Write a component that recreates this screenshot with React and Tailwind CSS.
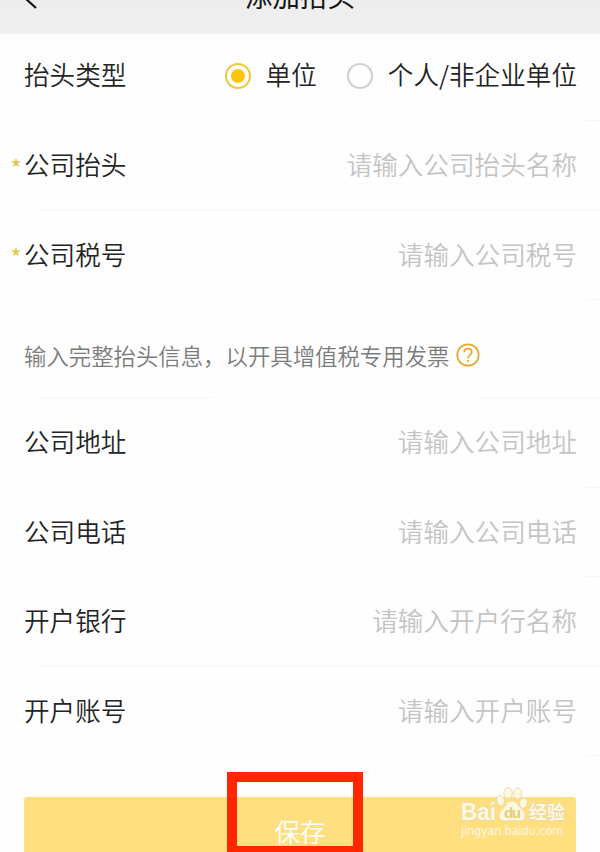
import React, { useState } from 'react';

const companyFields = [
  { label: '公司抬头', placeholder: '请输入公司抬头名称', required: true, height: 'h-[90px]', line: true },
  { label: '公司税号', placeholder: '请输入公司税号', required: true, height: 'h-[89px]' },
];

const bankFields = [
  { label: '公司地址', placeholder: '请输入公司地址', height: 'h-[90px]' },
  { label: '公司电话', placeholder: '请输入公司电话', height: 'h-[89px]' },
  { label: '开户银行', placeholder: '请输入开户行名称', height: 'h-[90px]', line: true },
  { label: '开户账号', placeholder: '请输入开户账号', height: 'h-[89px]' },
];

const Radio = ({ label, checked, onSelect }) => (
  <button onClick={onSelect} className="flex items-center">
    <span
      className={`flex size-[26px] items-center justify-center rounded-full border-2 ${
        checked ? 'border-[#edc63c]' : 'border-[#cfcfcf]'
      }`}
    >
      {checked && <span className="size-[14px] rounded-full bg-[#fcc50c]" />}
    </span>
    <span className="ml-[15px] pb-[4px]">{label}</span>
  </button>
);

const Field = ({ label, placeholder, required, height, line }) => (
  <div className={`flex shrink-0 flex-col ${height}`}>
    <label className="flex flex-1 items-center pb-[3px] pr-[23px]">
      <span className="w-[24px] pl-[11px] pt-[5px] text-[21px] font-medium text-[#e3c63c]">{required && '*'}</span>
      <span>{label}</span>
      <input
        className="ml-auto w-[260px] text-right outline-none placeholder:text-[#c4c4c4]"
        placeholder={placeholder}
      />
    </label>
    <div className={`ml-auto h-px bg-[#f5f5f5] ${line ? 'w-[564px]' : 'w-[13px]'}`} />
  </div>
);

const Watermark = () => (
  <div className="absolute left-[437px] top-[-10px] w-[108px] font-normal text-[#fff8e2]">
    <svg width="108" height="36" viewBox="0 0 108 36" fill="#fff8e2" stroke="#ead8a4" strokeWidth="0.8">
      <ellipse cx="39.500" cy="13.500" rx="3.800" ry="5.200" transform="rotate(-10 39.5 13.5)" />
      <ellipse cx="47" cy="6" rx="4.200" ry="5.500" />
      <ellipse cx="56.500" cy="6.500" rx="4.200" ry="5.500" transform="rotate(8 56.5 6.5)" />
      <ellipse cx="62.500" cy="16" rx="3.800" ry="5.200" transform="rotate(14 62.5 16)" />
      <path d="M51 14c-5 0-6 5-9.500 8-5 4-5 12 2 12 3 0 4.500-.7 7-.7s4 .7 8 .7c7 0 7-8 2-12-3.500-3-4.500-8-9.500-8z" />
      <g style={{ paintOrder: 'stroke' }} strokeWidth="1.4" fontWeight="bold">
        <text x="0" y="33" fontFamily="Liberation Sans" fontSize="24" textLength="35" lengthAdjust="spacingAndGlyphs">Bai</text>
        <text x="68" y="32" fontFamily="Noto Sans CJK SC" fontSize="18" textLength="36">经验</text>
      </g>
      <text x="43" y="31" fontFamily="Liberation Sans" fontWeight="bold" fontSize="15" fill="#e8ca7a" stroke="none" textLength="17">du</text>
    </svg>
    <div className="mt-px font-['DejaVu_Sans'] text-[11.5px] leading-[15px] tracking-[-0.25px]">jingyan.baidu.com</div>
  </div>
);

const App = () => {
  const [type, setType] = useState('company');

  return (
    <div className="relative flex h-[852px] w-[600px] flex-col overflow-hidden bg-[#fefefe] font-['Noto_Sans_CJK_SC',sans-serif] text-[25.6px] leading-[36px] font-[350] text-[#242424]">
      <header className="flex h-[34px] shrink-0 items-start justify-between bg-linear-to-b from-[#ededed] to-[#f0f0f0] text-[#151515]">
        <svg className="-mt-3 ml-[23px]" width="18" height="24" viewBox="0 0 18 24" fill="none" stroke="currentColor" strokeWidth="2.2">
          <path d="M13 0L2 10l11 10" />
        </svg>
        <h1 className="-mt-[25px] text-[27.5px] leading-[40px] font-normal">添加抬头</h1>
        <span className="w-[41px]" />
      </header>

      <div className="flex h-[87px] shrink-0 flex-col">
        <div className="flex flex-1 items-center pb-[2px] pl-[24px] pr-[23px]">
          <span className="mr-auto pb-[4px]">抬头类型</span>
          <div className="flex gap-[30px]">
            <Radio label="单位" checked={type === 'company'} onSelect={() => setType('company')} />
            <Radio label="个人/非企业单位" checked={type === 'person'} onSelect={() => setType('person')} />
          </div>
        </div>
        <div className="ml-auto h-px w-[13px] bg-[#f5f5f5]" />
      </div>

      {companyFields.map((field) => (
        <Field key={field.label} {...field} />
      ))}

      <div className="flex h-[98px] shrink-0 flex-col">
        <div className="flex flex-1 items-center pl-[24px] pt-[13px] text-[22.4px] text-[#7c7c7c]">
          <span className="pb-px">输入完整抬头信息，以开具增值税专用发票</span>
          <svg className="ml-[7px]" width="24" height="24" viewBox="0 0 24 24" fill="none" stroke="#e5a82e" strokeWidth="1.7">
            <circle cx="12" cy="12" r="10.700" />
            <path d="M8.200 9.300c0-2.200 1.600-3.700 3.800-3.700s3.800 1.400 3.800 3.500c0 2.700-3.700 3-3.700 6.200M12.100 17v2" />
          </svg>
        </div>
        <div className="flex justify-between pl-9">
          <span className="h-px w-[178px] bg-[#f5f5f5]" />
          <span className="h-px w-[120px] bg-[#f5f5f5]" />
        </div>
      </div>

      {bankFields.map((field) => (
        <Field key={field.label} {...field} />
      ))}

      <div className="relative mx-6 mt-[41px] shrink-0">
        <button className="h-[70px] w-full rounded-[3px] bg-[#ffdf80] pb-[2px] text-[25.6px] text-white">保存</button>
        <Watermark />
      </div>

      <div className="absolute left-[227px] top-[772px] h-[84px] w-[136px] border-10 border-[#ff2600]" />
    </div>
  );
};

export default App;
